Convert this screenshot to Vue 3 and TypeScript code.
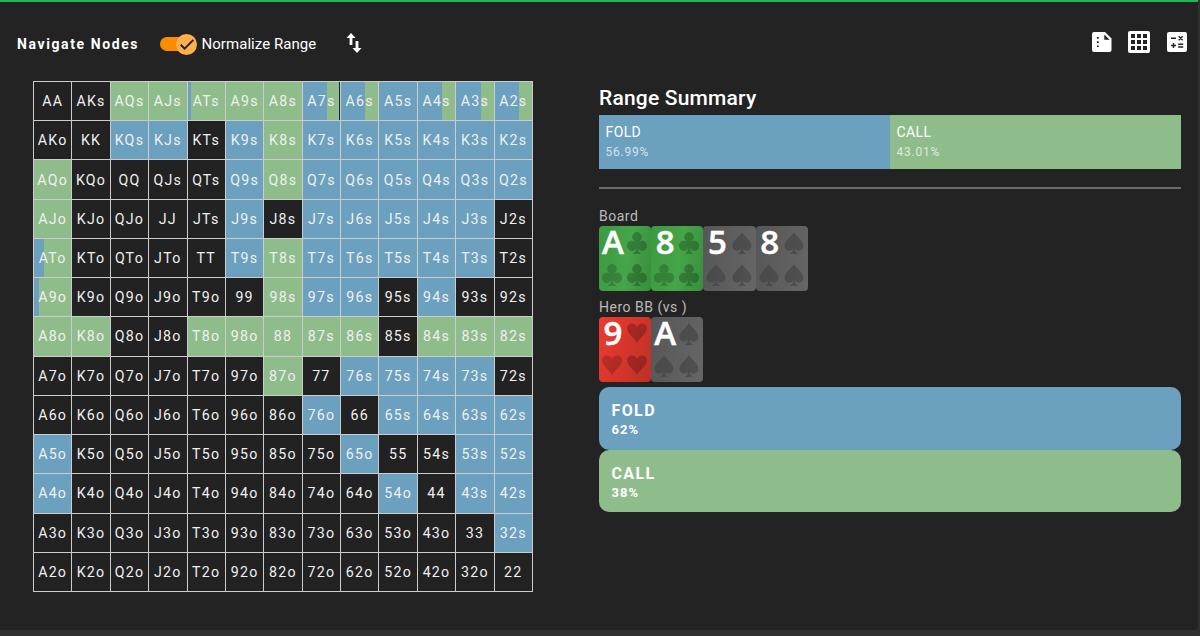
<script setup lang="ts">
type Suit = 'club' | 'spade' | 'heart'
interface PlayingCard { rank: string; suit: Suit }
interface Hand { name: string; kind: string; fold: number }

const ranks = 'AKQJT98765432'.split('')

// f = fold, c = call, . = not in range, a-z otherwise = mixed strategy
const rows = [
  '..ccvccxyfyyy',
  '..ff.fcffffff',
  'c....fcffffff',
  'c....f.fffff.',
  'u....fcfffff.',
  't.....cff.f..',
  'cc..ccccc.ccc',
  '......c.ffff.',
  '.......f.ffff',
  'f.......f..ff',
  'f........f.ff',
  '............f',
  '.............',
]
const mixes: Record<string, number> = { t: 14, u: 26, v: 9, x: 66, y: 65 }
const kinds: Record<string, string> = { '.': 'empty', f: 'fold', c: 'call', x: 'mixed short' }

const hands: Hand[] = rows.flatMap((row, i) =>
  row.split('').map((code, j) => ({
    name: i === j ? ranks[i] + ranks[i] : i < j ? ranks[i] + ranks[j] + 's' : ranks[j] + ranks[i] + 'o',
    kind: kinds[code] ?? 'mixed',
    fold: mixes[code] ?? 0,
  })),
)

const board: PlayingCard[] = [
  { rank: 'A', suit: 'club' },
  { rank: '8', suit: 'club' },
  { rank: '5', suit: 'spade' },
  { rank: '8', suit: 'spade' },
]
const hero: PlayingCard[] = [
  { rank: '9', suit: 'heart' },
  { rank: 'A', suit: 'spade' },
]
const groups = [
  { label: 'Board', cards: board },
  { label: 'Hero BB (vs )', cards: hero },
]
const summary = [
  { name: 'FOLD', pct: '56.99%', kind: 'fold' },
  { name: 'CALL', pct: '43.01%', kind: 'call' },
]
const actions = [
  { name: 'FOLD', pct: '62%', kind: 'fold' },
  { name: 'CALL', pct: '38%', kind: 'call' },
]
const suitPaths: Record<Suit, string> = {
  club: 'M10 0a4.7 4.7 0 0 1 3.8 7.5L12.6 9a4.9 4.9 0 1 1-1.7 6.5c.2 2.4 1.2 4 3.1 5.1v.4H6v-.4c1.900-1.100 2.900-2.700 3.100-5.100A4.900 4.900 0 1 1 7.400 9L6.200 7.500A4.700 4.700 0 0 1 10 0z',
  spade: 'M10 0c2.300 4.200 9.500 8.200 9.500 13.200 0 4.700-6 6-8.700 2.700.2 2.100 1.200 3.800 3.100 4.700v.4H6.100v-.4c1.900-.9 2.900-2.600 3.100-4.700C6.500 19.200.5 17.900.5 13.200.5 8.200 7.700 4.200 10 0z',
  heart: 'M10 21C8.500 16.500 0 11.500 0 5.500 0 0 7.700-1.500 10 4c2.300-5.500 10-4 10 1.500C20 11.500 11.500 16.500 10 21z',
}
</script>

<template>
  <main class="page">
    <section class="panel">
      <header class="toolbar">
        <span class="nav">Navigate Nodes</span>
        <span class="toggle">
          <span class="track"></span>
          <span class="thumb">
            <svg viewBox="0 0 24 24" width="18" height="18"><path d="M3.500 13l5.300 5.200L20.500 6.500" fill="none" stroke="#222" stroke-width="2.600" /></svg>
          </span>
        </span>
        <span class="toggle-label">Normalize Range</span>
        <svg class="swap" viewBox="0 0 16 20" width="16" height="20" fill="#fff">
          <path d="M5 0l4.500 5H6.400v7H3.600V5H.5zM11 20l-4.500-5h3.100V8h2.800v7h3.100z" />
        </svg>
        <div class="tools">
          <svg viewBox="0 0 20 20" width="20" height="20">
            <path fill="#fff" d="M2 0h11l6.500 6.500V18a2 2 0 0 1-2 2H2a2 2 0 0 1-2-2V2a2 2 0 0 1 2-2z" />
            <path fill="#222" d="M12.300 2.500v5.300h5.300zM5 5h1.700v1.700H5zM5 9.200h1.700v1.700H5zM5 13.400h1.700v1.700H5z" />
          </svg>
          <svg viewBox="0 0 22 22" width="22" height="22">
            <rect width="22" height="22" rx="2" fill="#fff" />
            <path fill="#222" d="M3 3h4v4H3zM9 3h4v4H9zM15 3h4v4h-4zM3 9h4v4H3zM9 9h4v4H9zM15 9h4v4h-4zM3 15h4v4H3zM9 15h4v4H9zM15 15h4v4h-4z" />
          </svg>
          <svg viewBox="0 0 20 20" width="20" height="20">
            <rect width="20" height="20" rx="2" fill="#fff" />
            <path d="M4 6.300h5M11.700 4.300l4 4M15.700 4.300l-4 4M4 13.500h5M6.500 11v5M11.200 12.300h5M11.200 15h5" fill="none" stroke="#222" stroke-width="1.400" />
          </svg>
        </div>
      </header>

      <div class="content">
        <div class="matrix">
          <div v-for="h in hands" :key="h.name" class="hand" :class="h.kind" :style="h.fold ? { '--fold': h.fold + '%' } : undefined">{{ h.name }}</div>
        </div>

        <aside class="side">
          <h2>Range Summary</h2>
          <div class="summary">
            <div v-for="s in summary" :key="s.name" class="part" :class="s.kind">
              <span>{{ s.name }}</span>
              <small>{{ s.pct }}</small>
            </div>
          </div>
          <hr />
          <div v-for="g in groups" :key="g.label" class="group">
            <div class="group-label">{{ g.label }}</div>
            <div class="cards">
              <div v-for="(c, i) in g.cards" :key="i" class="card" :class="c.suit">
                <span class="rank">{{ c.rank }}</span>
                <svg v-for="n in 3" :key="n" class="suit" :class="'s' + n" viewBox="0 0 20 21" preserveAspectRatio="none"><path :d="suitPaths[c.suit]" /></svg>
              </div>
            </div>
          </div>
          <div class="actions">
            <div v-for="a in actions" :key="a.name" class="action" :class="a.kind">
              <span>{{ a.name }}</span>
              <small>{{ a.pct }}</small>
            </div>
          </div>
        </aside>
      </div>
    </section>
  </main>
</template>

<style>
body {
  background: #303030;
}
</style>

<style scoped>
.page {
  --blue: #6ba0bf;
  --green: #8fbc8b;
  --dark: #222;
  box-sizing: border-box;
  width: 1200px;
  height: 636px;
  padding-right: 2px;
  background: #303030;
  color: #fff;
  font-family: Roboto, sans-serif;
  overflow: hidden;
}
.panel {
  box-sizing: border-box;
  height: 630px;
  border-top: 2px solid #1db954;
  border-radius: 0 0 4px 0;
  background: #232323;
}
.toolbar {
  display: flex;
  align-items: center;
  box-sizing: border-box;
  height: 79px;
  padding: 5px 11px 0 17px;
}
.nav {
  width: 143px;
  font-size: 14px;
  font-weight: 700;
  letter-spacing: 1.6px;
  white-space: nowrap;
}
.toggle {
  display: flex;
  align-items: center;
  width: 37px;
  height: 22px;
}
.track {
  width: 34px;
  height: 14px;
  border-radius: 7px;
  background: #fb8c00;
}
.thumb {
  display: flex;
  align-items: center;
  justify-content: center;
  flex: none;
  width: 21px;
  height: 21px;
  margin-left: -18px;
  border-radius: 50%;
  background: #ffb04c;
}
.toggle-label {
  margin-left: 4.500px;
  width: 144.500px;
  font-size: 15px;
  letter-spacing: 0.05px;
}
.swap {
  position: relative;
  top: -1px;
}
.tools {
  display: flex;
  align-items: center;
  gap: 16.700px;
  margin-left: auto;
  margin-top: -4px;
}
.content {
  display: flex;
  align-items: flex-start;
  padding-left: 33px;
}
.matrix {
  display: grid;
  grid-template-columns: repeat(13, 1fr);
  grid-template-rows: repeat(13, 1fr);
  box-sizing: border-box;
  width: 500px;
  height: 511px;
  border-top: 1px solid #ccc;
  border-left: 1px solid #ccc;
}
.hand {
  display: flex;
  align-items: center;
  justify-content: center;
  min-width: 0;
  border-right: 1px solid #ccc;
  border-bottom: 1px solid #ccc;
  color: #f0f0f0;
  font-size: 14.200px;
  letter-spacing: 1.25px;
}
.empty {
  background: var(--dark);
}
.fold {
  background: var(--blue);
}
.call {
  background: var(--green);
}
.mixed {
  background: linear-gradient(90deg, var(--blue) var(--fold), var(--green) var(--fold));
}
.short {
  background: linear-gradient(90deg, var(--blue) var(--fold), var(--green) var(--fold) 97%, var(--dark) 97%);
}
.side {
  width: 582px;
  margin-left: 66px;
}
h2 {
  margin: 5px 0 4px;
  font-size: 21px;
  font-weight: 500;
  line-height: 25px;
  letter-spacing: 0.2px;
}
.summary {
  display: grid;
  grid-template-columns: 1fr 1fr;
  height: 54px;
}
.part {
  display: flex;
  flex-direction: column;
  box-sizing: border-box;
  height: 54px;
  padding: 8px 6.500px 0;
}
.part span {
  font-size: 14px;
  line-height: 19px;
  letter-spacing: 0.4px;
}
.part small {
  font-size: 12px;
  line-height: 20px;
  letter-spacing: 0.75px;
  opacity: 0.7;
}
hr {
  height: 2px;
  margin: 18px 0 17px;
  border: 0;
  background: #6a6a6a;
}
.group-label {
  height: 20px;
  color: #bbb;
  font-size: 14px;
  line-height: 20px;
  letter-spacing: 0.5px;
}
.group + .group {
  margin-top: 6px;
}
.cards {
  display: flex;
  height: 65px;
}
.card {
  position: relative;
  width: 52.200px;
  height: 65px;
  border-radius: 4px;
}
.club {
  background: linear-gradient(100deg, #3c9a40, #45a549 55%, #388e3c);
}
.spade {
  background: linear-gradient(100deg, #565656, #666);
}
.heart {
  background: linear-gradient(110deg, #ee3b31, #bd3026);
}
.rank {
  position: absolute;
  top: 0;
  left: 3px;
  display: flex;
  justify-content: center;
  width: 22px;
  font-family: 'Open Sans', sans-serif;
  font-size: 33px;
  font-weight: 600;
  line-height: 32px;
  -webkit-text-stroke: 0.5px #fff;
}
.suit {
  position: absolute;
  width: 20px;
  height: 22px;
  fill: rgba(0, 0, 0, 0.23);
}
.spade .suit {
  fill: rgba(0, 0, 0, 0.2);
}
.s1 {
  top: 6px;
  right: 4px;
}
.s2 {
  bottom: 5px;
  left: 3px;
  opacity: 0.8;
}
.s3 {
  right: 4px;
  bottom: 5px;
}
.heart .suit {
  height: 20px;
}
.heart .s2,
.heart .s3 {
  bottom: 7px;
}
.actions {
  margin-top: 5.400px;
}
.action {
  display: flex;
  flex-direction: column;
  box-sizing: border-box;
  height: 62.500px;
  padding: 14px 12.500px;
  border-radius: 10px;
  font-weight: 700;
}
.action span {
  font-size: 16px;
  line-height: 20px;
  letter-spacing: 1.4px;
}
.action small {
  font-size: 13px;
  line-height: 17px;
  letter-spacing: 1.1px;
}
</style>
